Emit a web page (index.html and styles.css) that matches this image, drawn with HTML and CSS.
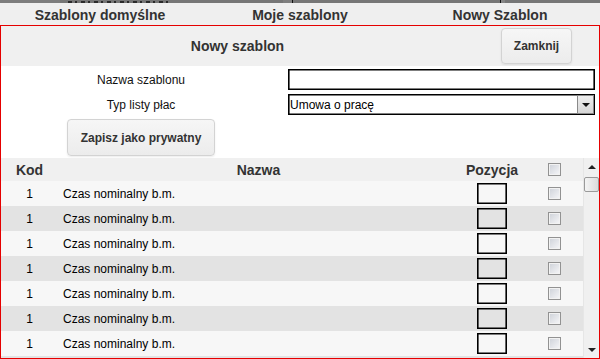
FILE: index.html
```html
<!DOCTYPE html>
<html lang="pl">
<head>
<meta charset="utf-8">
<title>Nowy szablon</title>
<link rel="stylesheet" href="styles.css">
</head>
<body>
<div class="strip">
  <div class="strip-a"></div>
  <div class="strip-b"><span class="frag"></span></div>
  <div class="strip-c"></div>
  <div class="strip-d"></div>
</div>
<nav class="tabs">
  <a class="tab">Szablony domyślne</a>
  <a class="tab">Moje szablony</a>
  <a class="tab">Nowy Szablon</a>
</nav>
<section class="panel">
  <header class="panel-head">
    <h2 class="panel-title">Nowy szablon</h2>
    <button class="btn" type="button">Zamknij</button>
  </header>
  <div class="form">
    <label class="label">Nazwa szablonu</label>
    <input class="text-input" type="text">
    <label class="label">Typ listy płac</label>
    <div class="select"><span class="select-text">Umowa o pracę</span><span class="select-btn"><span class="tri-down"></span></span></div>
    <div class="save-cell"><button class="btn btn-save" type="button">Zapisz jako prywatny</button></div>
  </div>
  <div class="grid-area">
    <div class="table">
      <div class="row head-row">
        <div class="c-kod">Kod</div>
        <div class="c-name-h">Nazwa</div>
        <div class="c-poz">Pozycja</div>
        <div class="c-cb"><input class="cb" type="checkbox"></div>
      </div>
      <div class="row odd"><div class="c-kod">1</div><div class="c-name">Czas nominalny b.m.</div><div class="c-poz"><input class="poz" type="text"></div><div class="c-cb"><input class="cb" type="checkbox"></div></div>
      <div class="row even"><div class="c-kod">1</div><div class="c-name">Czas nominalny b.m.</div><div class="c-poz"><input class="poz" type="text"></div><div class="c-cb"><input class="cb" type="checkbox"></div></div>
      <div class="row odd"><div class="c-kod">1</div><div class="c-name">Czas nominalny b.m.</div><div class="c-poz"><input class="poz" type="text"></div><div class="c-cb"><input class="cb" type="checkbox"></div></div>
      <div class="row even"><div class="c-kod">1</div><div class="c-name">Czas nominalny b.m.</div><div class="c-poz"><input class="poz" type="text"></div><div class="c-cb"><input class="cb" type="checkbox"></div></div>
      <div class="row odd"><div class="c-kod">1</div><div class="c-name">Czas nominalny b.m.</div><div class="c-poz"><input class="poz" type="text"></div><div class="c-cb"><input class="cb" type="checkbox"></div></div>
      <div class="row even"><div class="c-kod">1</div><div class="c-name">Czas nominalny b.m.</div><div class="c-poz"><input class="poz" type="text"></div><div class="c-cb"><input class="cb" type="checkbox"></div></div>
      <div class="row odd"><div class="c-kod">1</div><div class="c-name">Czas nominalny b.m.</div><div class="c-poz"><input class="poz" type="text"></div><div class="c-cb"><input class="cb" type="checkbox"></div></div>
    </div>
    <div class="scrollbar">
      <span class="tri-up"></span>
      <span class="thumb"></span>
      <span class="track"></span>
      <span class="tri-down small"></span>
    </div>
  </div>
</section>
</body>
</html>
```
FILE: styles.css
```css
* { box-sizing: border-box; }
html, body { margin: 0; padding: 0; }
body {
  width: 600px;
  height: 359px;
  overflow: hidden;
  font-family: "Liberation Sans", Arial, sans-serif;
  font-size: 12px;
  color: #000;
  background: #fff;
}

/* top dark strip (bottom of the page above) */
.strip { display: flex; height: 3px; background: #767676; }
.strip-a { width: 60px; background: #7d7d7d; }
.strip-b { width: 223px; position: relative; }
.frag {
  position: absolute; left: 8px; top: 1px; width: 100px; height: 2px;
  background: repeating-linear-gradient(90deg, #2a2a2a 0 4px, transparent 4px 7px, #2a2a2a 7px 9px, transparent 9px 13px);
}
.strip-c { width: 218px; border-left: 9px solid #7f7f7f; box-shadow: inset 1px 0 0 #111; border-right: 1px solid #111; }
.strip-d { flex: 1; border-left: 4px solid #858585; }

/* tabs */
.tabs {
  display: grid;
  grid-template-columns: repeat(3, 200px);
  height: 22px;
  background: #efefef;
}
.tab {
  text-align: center;
  font-weight: bold;
  font-size: 14px;
  line-height: 19px;
  padding-top: 3px;
  color: #333;
}

/* panel */
.panel {
  height: 334px;
  border: 1px solid #e50000;
  display: flex;
  flex-direction: column;
  overflow: hidden;
}
.panel-head {
  display: grid;
  grid-template-columns: 473px 1fr;
  align-items: center;
  height: 40px;
  background: #f0f0f0;
}
.panel-title {
  margin: 0;
  text-align: center;
  font-size: 14px;
  font-weight: bold;
  color: #333;
}
.btn {
  justify-self: center;
  height: 36px;
  padding: 0 12px;
  font-family: "Liberation Sans", Arial, sans-serif;
  font-size: 12px;
  font-weight: bold;
  color: #333;
  background: linear-gradient(#f6f6f6, #ececec);
  border: 1px solid #d3d3d3;
  border-radius: 4px;
  box-shadow: 0 1px 2px rgba(0,0,0,0.08);
}

/* form */
.form {
  display: grid;
  grid-template-columns: 280px 307px;
  grid-auto-rows: 21px 21px 36px;
  column-gap: 7px;
  row-gap: 4px;
  padding: 3px 4px 3px 0;
  height: 92px;
  background: #fff;
}
.label {
  text-align: center;
  align-self: center;
  color: #111;
}
.text-input {
  width: 307px;
  height: 21px;
  margin: 0;
  border: 1px solid #000;
  box-shadow: inset 0 0 0 0.6px #000;
  background: #fff;
  font: inherit;
}
.select {
  display: flex;
  align-items: center;
  height: 21px;
  border: 1px solid #000;
  box-shadow: inset 0 0 0 0.6px #000;
  background: #fff;
}
.select-text { flex: 1; padding-left: 1px; }
.select-btn {
  width: 17px;
  height: 19px;
  display: flex;
  align-items: center;
  justify-content: center;
  background: linear-gradient(#eee, #d6d6d6);
  border: 1px solid #8a8a8a;
}
.tri-down {
  width: 0; height: 0;
  border-left: 4px solid transparent;
  border-right: 4px solid transparent;
  border-top: 4px solid #111;
}
.save-cell { display: flex; justify-content: center; }
.btn-save { height: 37px; padding: 0 13px; }

/* table */
.grid-area {
  flex: 1;
  display: grid;
  grid-template-columns: 582px 16px;
  min-height: 0;
}
.table { overflow: hidden; background: #e3e3e3; }
.row {
  display: grid;
  grid-template-columns: 57px 401px 66px 58px;
  align-items: center;
  height: 25px;
}
.head-row {
  height: 23px;
  background: #f0f0f0;
  font-size: 14px;
  font-weight: bold;
  color: #333;
}
.odd { background: #f7f7f7; }
.even { background: #e3e3e3; }
.c-kod, .c-poz, .c-cb, .c-name-h { text-align: center; }
.c-name { padding-left: 5px; }
.c-cb, .c-poz { display: flex; justify-content: center; }
.poz {
  width: 30px;
  height: 21px;
  margin: 0;
  border: 1px solid #000;
  box-shadow: inset 0 0 0 0.6px #000;
  background: transparent;
}
.cb {
  appearance: none;
  -webkit-appearance: none;
  width: 13px;
  height: 13px;
  margin: 0;
  border: 1px solid #929292;
  background: linear-gradient(135deg, #cdd1d8, #f7f7f9);
  box-shadow: inset 0 0 0 1px #f2f2f2;
}

/* scrollbar */
.scrollbar {
  display: flex;
  flex-direction: column;
  align-items: center;
  background: #f0f0f0;
  border-left: 1px solid #e6e6e6;
  padding: 7px 0 6px;
}
.tri-up {
  width: 0; height: 0;
  border-left: 4px solid transparent;
  border-right: 4px solid transparent;
  border-bottom: 4px solid #222;
}
.thumb {
  margin-top: 8px;
  width: 15px;
  height: 15px;
  margin-left: -1px;
  border: 1px solid #9a9a9a;
  border-radius: 2px;
  background: linear-gradient(90deg, #f4f4f4, #dcdcdc);
}
.track { flex: 1; }
.tri-down.small { border-top-color: #222; }
```
